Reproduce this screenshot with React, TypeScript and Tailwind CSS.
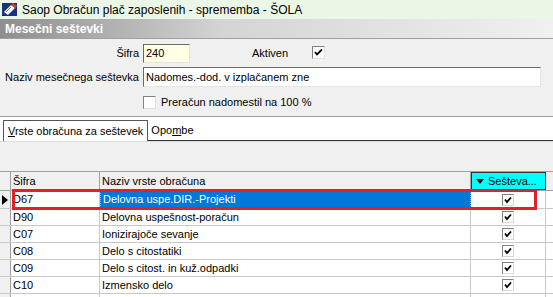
import React from "react";

const rows = [
  { code: "D67", name: "Delovna uspe.DIR.-Projekti", sel: true },
  { code: "D90", name: "Delovna uspešnost-poračun" },
  { code: "C07", name: "Ionizirajoče sevanje" },
  { code: "C08", name: "Delo s citostatiki" },
  { code: "C09", name: "Delo s citost. in kuž.odpadki" },
  { code: "C10", name: "Izmensko delo" },
  { code: "", name: "" },
];

function Check({ on = true }: { on?: boolean }) {
  return (
    <div className="w-[13px] h-[13px] bg-white border border-t-[#808080] border-l-[#808080] border-b-[#e0e0e0] border-r-[#e0e0e0] flex items-center justify-center">
      {on && (
        <svg width="9" height="9" viewBox="0 0 9 9">
          <path d="M1 4 L3 6.5 L8 1.5" stroke="#000" strokeWidth="1.8" fill="none" />
        </svg>
      )}
    </div>
  );
}

function GridCheck() {
  return (
    <div className="w-[12px] h-[12px] bg-white border border-t-[#808080] border-l-[#808080] border-b-[#d8d8d8] border-r-[#d8d8d8] flex items-center justify-center">
      <svg width="8" height="8" viewBox="0 0 8 8">
        <path d="M1 3.5 L3 6 L7 1.5" stroke="#000" strokeWidth="1.8" fill="none" />
      </svg>
    </div>
  );
}

export default function App() {
  return (
    <div className="w-[553px] h-[297px] overflow-hidden bg-[#f0f0f0] font-['Liberation_Sans',Arial,sans-serif] text-[11px] text-black leading-none flex flex-col">
      {/* Title bar */}
      <div className="h-[19px] bg-[#ebf7e6] flex items-center shrink-0">
        <svg className="ml-[2px] mr-[5px]" width="15" height="15" viewBox="0 0 15 15">
          <rect x="0" y="1" width="15" height="13" fill="#1c2f86" />
          <path d="M2 10 L9 3 L13 6 L6 13 Z" fill="#ffffff" />
          <path d="M9 3 L11 1 L15 4 L13 6 Z" fill="#e23a2a" />
          <path d="M4 10 L9 5" stroke="#7a8ad0" strokeWidth="1" />
        </svg>
        <span className="text-[12px] text-black">Saop Obračun plač zaposlenih - sprememba - ŠOLA</span>
      </div>

      {/* Section heading */}
      <div className="h-[19px] bg-gradient-to-r from-[#8e8e8e] via-[#d4d4d4] via-40% to-[#f0f0f0] flex items-center pl-[5px] shrink-0">
        <span className="text-white font-bold text-[12px]">Mesečni seštevki</span>
      </div>
      <div className="h-px bg-[#a0a0a0] shrink-0" />

      {/* Form */}
      <div className="h-[78px] shrink-0 flex flex-col pt-[5px] border-b border-[#a0a0a0]">
        <div className="flex items-center h-[19px]">
          <div className="w-[139px] text-right">Šifra</div>
          <div className="ml-[4px] w-[47px] h-[19px] bg-[#ffffe4] border border-t-[#696969] border-l-[#696969] border-b-[#e3e3e3] border-r-[#e3e3e3] flex items-center pl-[2px]">
            240
          </div>
          <div className="ml-[62px] w-[60px]">Aktiven</div>
          <div className="mt-[-2px]">
            <Check />
          </div>
        </div>
        <div className="flex items-center h-[20px] mt-[4px]">
          <div className="w-[139px] text-right">Naziv mesečnega seštevka</div>
          <div className="ml-[4px] w-[398px] h-[20px] bg-white border border-t-[#696969] border-l-[#696969] border-b-[#e3e3e3] border-r-[#e3e3e3] flex items-center pl-[2px]">
            Nadomes.-dod. v izplačanem zne
          </div>
        </div>
        <div className="flex items-center mt-[9px] ml-[143px] gap-[5px]">
          <Check on={false} />
          <span>Preračun nadomestil na 100 %</span>
        </div>
      </div>

      {/* Tabs */}
      <div className="h-[24px] bg-white shrink-0 flex items-end">
        <div className="ml-[3px] h-[21px] px-[4px] bg-white border border-b-0 border-[#555] flex items-center">
          <span>
            <span className="underline">V</span>rste obračuna za seštevek
          </span>
        </div>
        <div className="h-[21px] flex-1 border-b border-[#333] flex items-center pl-[3px]">
          <span>
            Opo<span className="underline">m</span>be
          </span>
        </div>
      </div>
      <div className="h-[30px] shrink-0 border-t border-[#dcdcdc]" />

      {/* Grid */}
      <div className="flex-1 bg-white border-t border-[#a0a0a0] relative">
        <div className="flex h-[19px] bg-[#f0f0f0] border-b border-[#a0a0a0]">
          <div className="w-[11px] border-r border-[#a0a0a0]" />
          <div className="w-[89px] border-r border-[#a0a0a0] flex items-center pl-[2px]">Šifra</div>
          <div className="w-[371px] border-r border-[#a0a0a0] flex items-center pl-[2px]">Naziv vrste obračuna</div>
          <div className="w-[75px] bg-[#00ffff] border border-[#333] flex items-center pl-[4px] gap-[4px]">
            <svg width="8" height="5" viewBox="0 0 8 5">
              <path d="M0 0 L8 0 L4 5 Z" fill="#000" />
            </svg>
            <span>Sešteva...</span>
          </div>
          <div className="flex-1" />
        </div>
        {rows.map((r, i) => (
          <div key={i} className={`flex ${i === 0 ? "h-[18px]" : "h-[17px]"} border-b border-[#c8c8c8]`}>
            <div className="w-[11px] bg-[#f0f0f0] border-r border-[#a0a0a0] flex items-center justify-center">
              {r.sel && (
                <svg width="6" height="10" viewBox="0 0 6 10">
                  <path d="M0 0 L6 5 L0 10 Z" fill="#000" />
                </svg>
              )}
            </div>
            <div className="w-[89px] border-r border-[#c8c8c8] flex items-center pl-[2px]">{r.code}</div>
            <div
              className={`w-[371px] border-r flex items-center pl-[2px] ${
                r.sel ? "bg-[#0078d7] text-white border border-dotted border-[#e8a040]" : "border-[#c8c8c8]"
              }`}
            >
              {r.name}
            </div>
            <div className="w-[75px] border-r border-[#c8c8c8] flex items-center justify-center">
              {r.code && <GridCheck />}
            </div>
            <div className="flex-1" />
          </div>
        ))}
        {/* highlight annotation */}
        <div className="absolute left-[12px] top-[17px] w-[525px] h-[21px] border-[3px] border-[#e2202c] pointer-events-none" />
      </div>
    </div>
  );
}
